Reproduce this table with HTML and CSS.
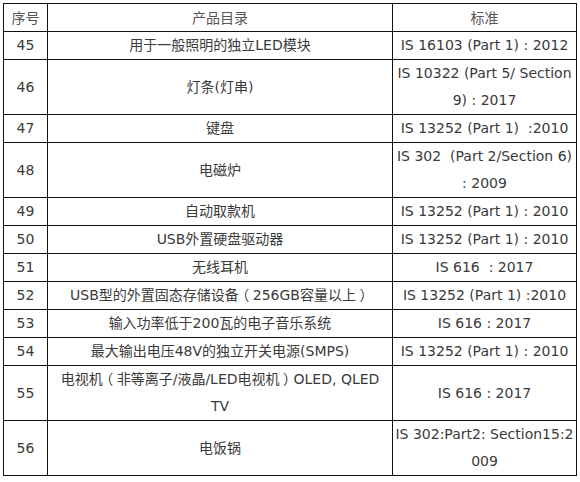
FILE: index.html
```html
<!DOCTYPE html>
<html lang="zh">
<head>
<meta charset="utf-8">
<link rel="stylesheet" href="styles.css">
</head>
<body>
<table class="std-table">
  <colgroup>
    <col class="c-no">
    <col class="c-name">
    <col class="c-std">
  </colgroup>
  <thead>
    <tr><th>序号</th><th>产品目录</th><th>标准</th></tr>
  </thead>
  <tbody>
    <tr><td>45</td><td>用于一般照明的独立LED模块</td><td>IS 16103 (Part 1) : 2012</td></tr>
    <tr><td>46</td><td>灯条(灯串)</td><td>IS 10322 (Part 5/ Section<br>9) : 2017</td></tr>
    <tr><td>47</td><td>键盘</td><td>IS 13252 (Part 1)&nbsp; :2010</td></tr>
    <tr><td>48</td><td>电磁炉</td><td>IS 302&nbsp; (Part 2/Section 6)<br>: 2009</td></tr>
    <tr><td>49</td><td>自动取款机</td><td>IS 13252 (Part 1) : 2010</td></tr>
    <tr><td>50</td><td>USB外置硬盘驱动器</td><td>IS 13252 (Part 1) : 2010</td></tr>
    <tr><td>51</td><td>无线耳机</td><td>IS 616&nbsp; : 2017</td></tr>
    <tr><td>52</td><td>USB型的外置固态存储设备<span class="fwp">（</span>256GB容量以上<span class="fwp">）</span></td><td>IS 13252 (Part 1) :2010</td></tr>
    <tr><td>53</td><td>输入功率低于200瓦的电子音乐系统</td><td>IS 616 : 2017</td></tr>
    <tr><td>54</td><td>最大输出电压48V的独立开关电源(SMPS)</td><td>IS 13252 (Part 1) : 2010</td></tr>
    <tr><td>55</td><td>电视机<span class="fwp">（</span>非等离子/液晶/LED电视机<span class="fwp">）</span>OLED, QLED<br>TV</td><td>IS 616 : 2017</td></tr>
    <tr><td>56</td><td>电饭锅</td><td>IS 302:Part2: Section15:2<br>009</td></tr>
  </tbody>
</table>
</body>
</html>
```
FILE: styles.css
```css
html, body {
  margin: 0;
  padding: 0;
  background: #fff;
}
body {
  padding: 3px;
  font-family: "DejaVu Sans", "Noto Sans CJK SC", sans-serif;
  font-size: 14px;
  color: #3a3a3a;
}
.std-table {
  border-collapse: collapse;
  table-layout: fixed;
  width: 573px;
}
.c-no { width: 44px; }
.c-name { width: 345px; }
.c-std { width: 184px; }
.std-table th,
.std-table td {
  border: 1px solid #111;
  padding: 0;
  line-height: 27px;
  text-align: center;
  vertical-align: middle;
  font-weight: normal;
  white-space: nowrap;
  overflow: hidden;
}
.std-table th {
  color: #555;
  font-family: "Noto Sans CJK SC", sans-serif;
}
.fwp {
  font-feature-settings: "halt";
  margin: 0 3.5px;
}
```
